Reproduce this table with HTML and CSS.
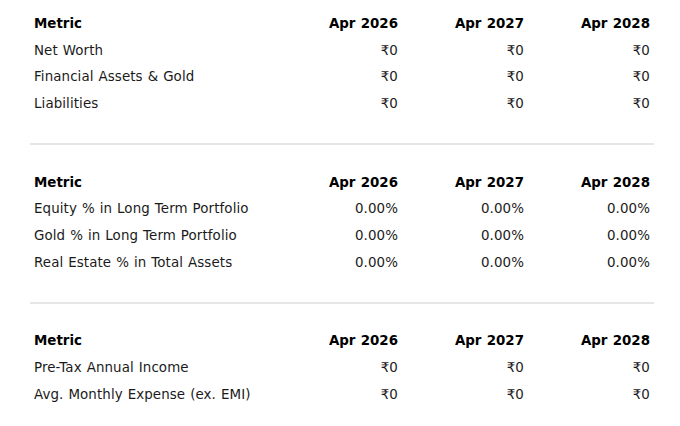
FILE: index.html
```html
<!DOCTYPE html>
<html>
<head>
<meta charset="utf-8">
<link rel="stylesheet" href="styles.css">
</head>
<body>
<div class="page">
  <section class="block">
    <table class="metrics">
      <colgroup><col class="c-name"><col><col><col></colgroup>
      <thead>
        <tr><th class="name">Metric</th><th>Apr 2026</th><th>Apr 2027</th><th>Apr 2028</th></tr>
      </thead>
      <tbody>
        <tr><td class="name">Net Worth</td><td>₹0</td><td>₹0</td><td>₹0</td></tr>
        <tr><td class="name">Financial Assets &amp; Gold</td><td>₹0</td><td>₹0</td><td>₹0</td></tr>
        <tr><td class="name">Liabilities</td><td>₹0</td><td>₹0</td><td>₹0</td></tr>
      </tbody>
    </table>
  </section>
  <hr class="divider">
  <section class="block">
    <table class="metrics">
      <colgroup><col class="c-name"><col><col><col></colgroup>
      <thead>
        <tr><th class="name">Metric</th><th>Apr 2026</th><th>Apr 2027</th><th>Apr 2028</th></tr>
      </thead>
      <tbody>
        <tr><td class="name">Equity % in Long Term Portfolio</td><td>0.00%</td><td>0.00%</td><td>0.00%</td></tr>
        <tr><td class="name">Gold % in Long Term Portfolio</td><td>0.00%</td><td>0.00%</td><td>0.00%</td></tr>
        <tr><td class="name">Real Estate % in Total Assets</td><td>0.00%</td><td>0.00%</td><td>0.00%</td></tr>
      </tbody>
    </table>
  </section>
  <hr class="divider">
  <section class="block">
    <table class="metrics">
      <colgroup><col class="c-name"><col><col><col></colgroup>
      <thead>
        <tr><th class="name">Metric</th><th>Apr 2026</th><th>Apr 2027</th><th>Apr 2028</th></tr>
      </thead>
      <tbody>
        <tr><td class="name">Pre-Tax Annual Income</td><td>₹0</td><td>₹0</td><td>₹0</td></tr>
        <tr><td class="name">Avg. Monthly Expense (ex. EMI)</td><td>₹0</td><td>₹0</td><td>₹0</td></tr>
      </tbody>
    </table>
  </section>
</div>
</body>
</html>
```

FILE: styles.css
```css
html, body {
  margin: 0;
  padding: 0;
  background: #ffffff;
}
body {
  font-family: "DejaVu Sans", Verdana, sans-serif;
  font-size: 13.4px;
  word-spacing: 0.6px;
  color: #1a1a1a;
}
.page {
  padding: 11px 26px 0 30px;
}
.metrics {
  width: 100%;
  border-collapse: collapse;
  table-layout: fixed;
}
.c-name {
  width: 246px;
}
.metrics th,
.metrics td {
  padding: 5px 4px;
  line-height: 16.67px;
  text-align: right;
  white-space: nowrap;
}
.metrics td {
  letter-spacing: 0.1px;
}
.metrics th {
  font-weight: bold;
  color: #000000;
}
.metrics .name {
  text-align: left;
}
.divider {
  border: 0;
  border-top: 2px solid #e6e6e6;
  margin: 25.5px 0 24.5px 0;
  height: 0;
}
```
